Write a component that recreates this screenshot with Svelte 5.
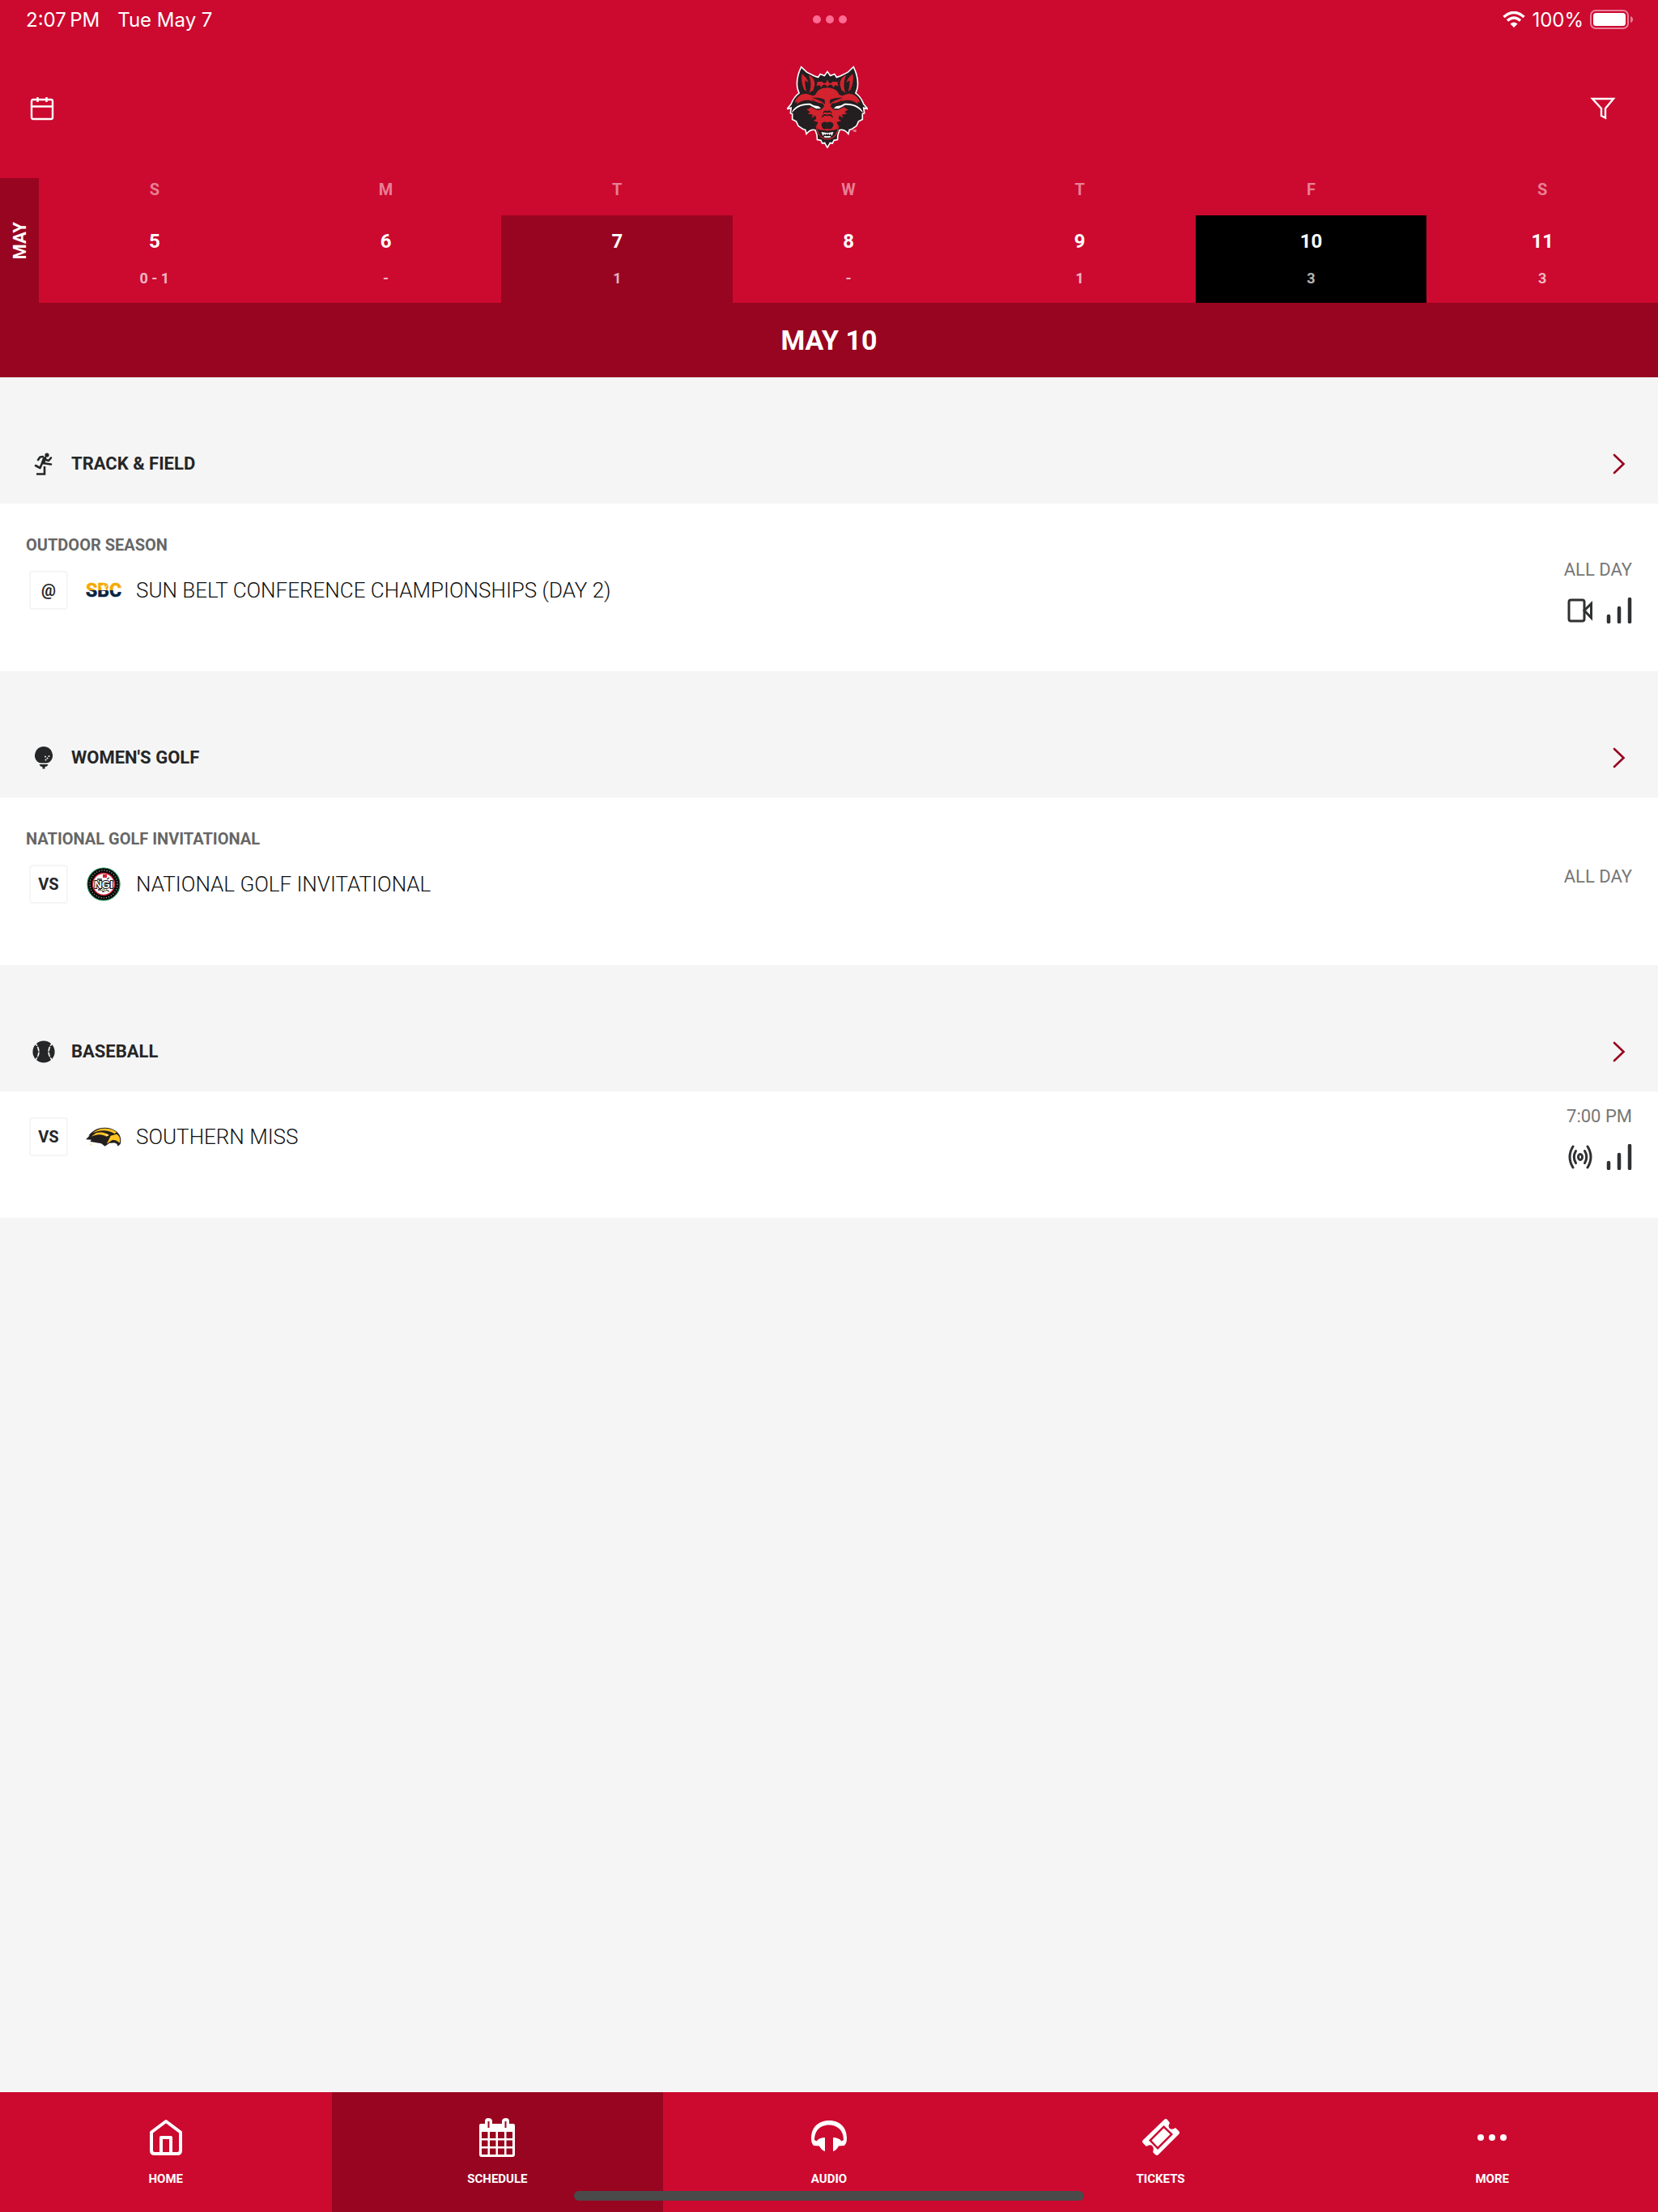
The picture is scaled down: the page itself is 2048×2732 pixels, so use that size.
<script lang="ts">
	type Day = { letter: string; name: string; date: number; record: string; today?: boolean };
	type Section = {
		sport: string;
		icon: 'track' | 'golf' | 'baseball';
		label?: string;
		site: string;
		logo: 'sbc' | 'ngi' | 'usm';
		title: string;
		time: string;
		media: ('video' | 'audio' | 'stats')[];
	};

	const days: Day[] = [
		{ letter: 'S', name: 'Sunday', date: 5, record: '0 - 1' },
		{ letter: 'M', name: 'Monday', date: 6, record: '-' },
		{ letter: 'T', name: 'Tuesday', date: 7, record: '1', today: true },
		{ letter: 'W', name: 'Wednesday', date: 8, record: '-' },
		{ letter: 'T', name: 'Thursday', date: 9, record: '1' },
		{ letter: 'F', name: 'Friday', date: 10, record: '3' },
		{ letter: 'S', name: 'Saturday', date: 11, record: '3' },
	];

	const sections: Section[] = [
		{
			sport: 'TRACK & FIELD',
			icon: 'track',
			label: 'OUTDOOR SEASON',
			site: '@',
			logo: 'sbc',
			title: 'SUN BELT CONFERENCE CHAMPIONSHIPS (DAY 2)',
			time: 'ALL DAY',
			media: ['video', 'stats'],
		},
		{
			sport: "WOMEN'S GOLF",
			icon: 'golf',
			label: 'NATIONAL GOLF INVITATIONAL',
			site: 'VS',
			logo: 'ngi',
			title: 'NATIONAL GOLF INVITATIONAL',
			time: 'ALL DAY',
			media: [],
		},
		{
			sport: 'BASEBALL',
			icon: 'baseball',
			site: 'VS',
			logo: 'usm',
			title: 'SOUTHERN MISS',
			time: '7:00 PM',
			media: ['audio', 'stats'],
		},
	];

	const tabs = ['HOME', 'SCHEDULE', 'AUDIO', 'TICKETS', 'MORE'];

	let selected = $state(10);
	let activeTab = $state('SCHEDULE');
</script>

{#snippet wolfHalf()}
	<path class="red" d="M151 91 C147 108 151 134 160 152 L168 157 C163 140 162 124 163 116 L176 124 C170 108 162 100 151 91Z" />
	<path class="red" d="M176 96 C190 100 201 116 199 134 L193 155 C188 154 184 158 178 165 C187 142 186 118 176 96Z" />
	<path class="red" d="M206 137 L209 121 L228 121 L234 127 L242 124 L247 113 L247.5 141 L240 132 L229 133 L225 143 L218 134Z" />
	<path class="red" d="M123 201 C127 180 147 165 168 166 L190 173 C187 182 190 191 197 196 C172 187 150 190 131 206 L133 196Z" />
	<path class="red" d="M247.5 143 C222 143 208 154 202 170 L184 176 C192 192 205 201 230 203 L235 214 L224 226 L208 228 L184 217 L177 223 L168 225 L182 236 L172 241 L192 246 L187 259 L202 248 L205 262 L194 268 L212 274 L206 286 L211 300 L221 303 L247.5 306Z" />
	<path class="white" d="M112 240 C117 217 144 201 182 203 L196 211 L214 214 L223 222 L205 223 L190 215 L180 209 C150 207 127 219 112 240Z" />
	<path class="ink" d="M190 181 C211 181 231 184 237 190 L238 206 C226 193 208 190 190 181Z" />
	<path class="ink" d="M233 233 C239 228 244 229 247.5 233 L247.5 239 L238 236 L229 243Z" />
	<path class="ink" d="M226 254 C229 242 239 241 247.5 246 L247.5 251 C240 247 234 249 228 257Z" />
	<path class="ink" d="M224 285 C226 272 237 271 247.5 275 L247.5 299 C238 302 229 300 227 292Z" />
	<path class="edge" d="M205 288 C208 317 220 333 238 337 L247.5 337" />
	<path class="white" d="M224 311 L247.5 315 L247.5 321 L242 317 L239 324 L235 317 L230 326Z M233 329 L236 326 L247.5 327 L247.5 332 L238 332Z" />
{/snippet}

{#snippet sportIcon(name: Section['icon'])}
	{#if name === 'track'}
		<svg class="sport-icon" viewBox="0 0 28 28" aria-hidden="true">
			<circle cx="18" cy="3" r="2.6" />
			<path d="M7 9 L9.500 5.500 L13 5 M16 6 L12 13 L9.500 19 L4 16 M13 13 L23 14.500 M17 9 L20 10 L23 6.500" fill="none" stroke="currentColor" stroke-width="2.6" stroke-linecap="round" stroke-linejoin="round" />
			<path d="M15.500 6 L13 13" stroke="currentColor" stroke-width="4.5" />
			<path d="M5 26.500 H15 V17" fill="none" stroke="currentColor" stroke-width="2.6" />
		</svg>
	{:else if name === 'golf'}
		<svg class="sport-icon" viewBox="0 0 28 28" aria-hidden="true">
			<path d="M14 0 A11 11 0 0 1 22 18.500 Q20 20.500 17 20.500 H11 Q8 20.500 6 18.500 A11 11 0 0 1 14 0Z" />
			<path d="M8.500 22 H19.500 L18 24.500 L15.500 25 V27.500 H12.500 V25 L10 24.500Z" />
			<g fill="#f5f5f5">
				<circle cx="16" cy="12.500" r="1" /><circle cx="20.500" cy="12" r="1" />
				<circle cx="18.500" cy="14.500" r="1" /><circle cx="16.500" cy="16.500" r="1" />
			</g>
		</svg>
	{:else}
		<svg class="sport-icon" viewBox="0 0 28 28" aria-hidden="true">
			<circle cx="14" cy="14" r="13.600" />
			<path d="M4 4 Q12 14 4 24 M24 4 Q16 14 24 24" fill="none" stroke="#f5f5f5" stroke-width="1.5" />
			<path d="M4 8.500 L7.500 6.500 M5 14 H9 M4 19.500 L7.500 21.500 M24 8.500 L20.500 6.500 M23 14 H19 M24 19.500 L20.500 21.500" stroke="#252627" stroke-width="1.2" />
		</svg>
	{/if}
{/snippet}

{#snippet teamLogo(name: Section['logo'])}
	{#if name === 'sbc'}
		<svg class="team-logo" viewBox="0 0 48 48" role="img" aria-label="Sun Belt Conference">
			<defs>
				<linearGradient id="sbc-split" gradientUnits="userSpaceOnUse" x1="0" y1="14" x2="0" y2="34">
					<stop offset="0.5" stop-color="#f5a800" />
					<stop offset="0.5" stop-color="#0a2240" />
				</linearGradient>
			</defs>
			<text class="sbc" x="24" y="32" text-anchor="middle" fill="url(#sbc-split)" stroke="url(#sbc-split)">SBC</text>
			<path d="M24 24 L20 18 M24 24 V16 M24 24 L28 18" stroke="#fff" stroke-width="0.8" />
			<path d="M21 24 A3 3 0 0 1 27 24Z" fill="#fff" />
		</svg>
	{:else if name === 'ngi'}
		<svg class="team-logo" viewBox="0 0 48 48" role="img" aria-label="National Golf Invitational">
			<circle cx="24" cy="24" r="20" fill="#060606" stroke="#16854b" stroke-width="1.200" />
			<circle cx="24" cy="24" r="17" fill="none" stroke="#8a8d8b" stroke-width="1.600" stroke-dasharray="1.200 2" />
			<circle cx="24" cy="24" r="13.500" fill="#fff" stroke="#d3263a" stroke-width="1.400" />
			<path d="M23 12 H28 V16 H23Z" fill="#d92035" />
			<path d="M16 18 H22 M28 18 L31 16 M17 31 H21 M22 33 H25 M27 31 L31 33" stroke="#333" stroke-width="1.300" />
			<path d="M21 32 L24 30 L27 33" stroke="#9aa05a" stroke-width="1.300" fill="none" />
			<text class="ngi" x="24" y="29" text-anchor="middle">NGI</text>
		</svg>
	{:else}
		<svg class="team-logo" viewBox="314 391 144 144" role="img" aria-label="Southern Miss">
			<path d="M320 473 L335 458 L330 459 C344 440 365 428 392 429 C412 430 431 437 439 449 C448 457 453 475 448 490 L439 498 L435 489 C426 483 418 486 408 486 L391 498 L377 488 L336 481 L341 474Z" fill="#231f20" />
			<path d="M345 449 C359 437 376 431 393 432 C413 433 426 439 434 446 L427 452 C407 440 384 437 363 443Z" fill="#ffc423" />
			<path d="M340 462 L358 449 C378 443 391 447 407 456 L397 462 C380 452 362 452 340 462Z" fill="#ffc423" />
			<path d="M405 474 L412 459 L434 453 C447 461 449 474 445 486 C440 480 430 473 418 475 L397 489Z" fill="#ffc423" />
			<path d="M393 453 L403 456 L400 461Z" fill="#fff" />
			<path d="M336 487 H342 V495 H336Z" fill="#ffe3a0" />
		</svg>
	{/if}
{/snippet}

{#snippet mediaIcon(name: string)}
	{#if name === 'video'}
		<svg viewBox="0 0 32 32" role="img" aria-label="Video">
			<rect x="2" y="3" width="19" height="26" rx="2.500" />
			<path d="M21 16 L29.500 7.500 V25 Z" />
		</svg>
	{:else if name === 'audio'}
		<svg viewBox="0 0 32 32" role="img" aria-label="Audio">
			<ellipse cx="16" cy="16" rx="2.500" ry="3.500" />
			<path d="M10.500 8.500 Q6 16 10.500 23.500 M21.500 8.500 Q26 16 21.500 23.500 M7 3 Q-1 16 7 29 M25 3 Q33 16 25 29" stroke-linecap="round" />
		</svg>
	{:else}
		<svg viewBox="0 0 32 32" role="img" aria-label="Stats">
			<path d="M3 23 V30 M16 13 V30 M29 2 V30" stroke-width="4.500" stroke-linecap="round" />
		</svg>
	{/if}
{/snippet}

{#snippet tabIcon(name: string)}
	{#if name === 'HOME'}
		<svg class="tab-icon" viewBox="0 0 48 48" aria-hidden="true">
			<path d="M6 17.500 L24 4 L42 17.500 V40 Q42 44 38 44 H10 Q6 44 6 40Z M18 44 V24 H30 V44" fill="none" stroke="currentColor" stroke-width="4" stroke-linejoin="round" />
		</svg>
	{:else if name === 'SCHEDULE'}
		<svg class="tab-icon" viewBox="0 0 48 48" aria-hidden="true">
			<path fill-rule="evenodd" d="M4 7 H9 V4 Q9 0 13 0 Q18 0 18 4 V7 H30 V4 Q30 0 35 0 Q39 0 39 4 V7 H44 Q46 7 46 9 V45 Q46 48 43 48 H5 Q2 48 2 45 V9 Q2 7 4 7Z
				M5 17 V25 H12.500 V17Z M15 17 V25 H22.500 V17Z M25 17 V25 H33 V17Z M35.500 17 V25 H43 V17Z
				M5 27.500 V35 H12.500 V27.500Z M15 27.500 V35 H22.500 V27.500Z M25 27.500 V35 H33 V27.500Z M35.500 27.500 V35 H43 V27.500Z
				M5 37.500 V45 H12.500 V37.500Z M15 37.500 V45 H22.500 V37.500Z M25 37.500 V45 H33 V37.500Z M35.500 37.500 V45 H43 V37.500Z" />
			<path d="M13.500 4 V12 M34.500 4 V12" stroke="#980520" stroke-width="2" />
		</svg>
	{:else if name === 'AUDIO'}
		<svg class="tab-icon" viewBox="0 0 48 48" aria-hidden="true">
			<path d="M2 25 C2 10 12 3 24 3 C36 3 46 10 46 25 Q46 31 43 34 L36 34.500 Q33 40 29 41 V24 Q36 24 39.500 28.500 L42 27 C42 15 34 8.500 24 8.500 C14 8.500 6 15 6 27 L8.500 28.500 Q12 24 19 24 V41 Q15 40 12 34.500 L5 34 Q2 31 2 25Z" />
		</svg>
	{:else if name === 'TICKETS'}
		<svg class="tab-icon" viewBox="0 0 48 48" aria-hidden="true">
			<path fill-rule="evenodd" d="M28 2 Q30 0 32 2 L35 6 Q32 10 35 13 Q38 15 42 12 L46 16 Q48 18 46 20 L21 45 Q19 47 17 45 L14 42 Q16 37 13 34 Q10 32 6 35 L2 31 Q0 29 2 27Z M27.500 9 L9 27.500 L20 39 L39 20Z M27.500 12.500 L35.500 20 L20 35.500 L12.500 27.500Z" />
		</svg>
	{:else}
		<svg class="tab-icon" viewBox="0 0 48 48" aria-hidden="true">
			<circle cx="10" cy="24" r="4" /><circle cx="24" cy="24" r="4" /><circle cx="38" cy="24" r="4" />
		</svg>
	{/if}
{/snippet}

<div class="screen">
	<header class="top">
		<div class="status-bar">
			<div class="status-side">
				<span>2:07&thinsp;PM</span>
				<span>Tue May 7</span>
			</div>
			<div class="multitask"><i></i><i></i><i></i></div>
			<div class="status-side right">
				<svg class="wifi" viewBox="0 0 28 20" aria-hidden="true">
					<path d="M1.500 7 Q14 -4 26.500 7 M6 11.500 Q14 4.500 22 11.500" fill="none" stroke="currentColor" stroke-width="3.600" />
					<path d="M9.500 15.500 Q14 11.500 18.500 15.500 L14 20Z" />
				</svg>
				<span>100%</span>
				<svg class="battery" viewBox="0 0 54 24" aria-hidden="true">
					<rect x="1" y="1" width="46" height="22" rx="6" fill="none" stroke="#e8809a" stroke-width="2" />
					<rect x="4" y="4" width="40" height="16" rx="3.500" />
					<path d="M50 8 Q53 9 53 12 Q53 15 50 16Z" fill="#e8809a" />
				</svg>
			</div>
		</div>

		<div class="app-bar">
			<button class="icon-button" type="button" aria-label="Open calendar">
				<svg viewBox="0 0 32 32" aria-hidden="true">
					<path d="M5 5 H27 Q29 5 29 7 V27 Q29 29 27 29 H5 Q3 29 3 27 V7 Q3 5 5 5Z M3 13.500 H29 M10.500 2 V8 M21.500 2 V8" />
				</svg>
			</button>
			<svg class="wolf" viewBox="94 60 306 312" role="img" aria-label="Red Wolves">
				<path
					class="outline"
					d="M247 87 L237 101 L221 95 L213 107 L196 101 L168 87 L149 69 C137 93 131 125 137 148 L143 165 C126 177 118 191 112 207 L102 219 L113 216 L110 238 L117 241 L117 262 L131 269 L139 286 L156 298 L166 301 L169 313 C178 302 193 297 203 302 L210 322 L211 338 L224 340 L229 351 L238 349 L247 365
					L256 349 L265 351 L270 340 L283 338 L284 322 L291 302 C301 297 316 302 325 313 L328 301 L338 298 L355 286 L363 269 L377 262 L377 241 L384 238 L381 216 L392 219 L382 207 C376 191 368 177 351 165 L357 148 C363 125 357 93 345 69 L326 87 L298 101 L281 107 L273 95 L257 101Z"
				/>
				<g>{@render wolfHalf()}</g>
				<g transform="translate(494 0) scale(-1 1)">{@render wolfHalf()}</g>
				<text class="tm" x="343" y="311">TM</text>
			</svg>
			<button class="icon-button filter" type="button" aria-label="Filter schedule">
				<svg viewBox="0 0 32 32" aria-hidden="true">
					<path d="M3 4 H29 L19 16 V27.500 L14 25 V16 Z" />
				</svg>
			</button>
		</div>

		<div class="week">
			<div class="month"><span>MAY</span></div>
			{#each days as day}
				<div class="day">
					<span class="letter">{day.letter}</span>
					<button
						class="date"
						class:today={day.today}
						class:selected={selected === day.date}
						type="button"
						aria-label="{day.name}, May {day.date}"
						aria-pressed={selected === day.date}
						onclick={() => (selected = day.date)}
					>
						<span class="number">{day.date}</span>
						<span class="record">{day.record}</span>
					</button>
				</div>
			{/each}
		</div>
	</header>

	<h1>MAY {selected}</h1>

	<main>
		{#each sections as section}
			<section>
				<a class="section-head" href="#{section.icon}">
					{@render sportIcon(section.icon)}
					<h2>{section.sport}</h2>
					<svg class="chevron" viewBox="0 0 16 26" aria-hidden="true">
						<path d="M2 2 L13.500 13 L2 24" />
					</svg>
				</a>
				<article>
					{#if section.label}
						<p class="label">{section.label}</p>
					{/if}
					<div class="event">
						<div class="matchup">
							<span class="site">{section.site}</span>
							{@render teamLogo(section.logo)}
							<h3>{section.title}</h3>
						</div>
						<div class="info">
							<span class="time">{section.time}</span>
							<div class="media">
								{#each section.media as item}
									{@render mediaIcon(item)}
								{/each}
							</div>
						</div>
					</div>
				</article>
			</section>
		{/each}
	</main>

	<nav>
		{#each tabs as tab}
			<button type="button" class:active={activeTab === tab} onclick={() => (activeTab = tab)}>
				{@render tabIcon(tab)}
				<span>{tab}</span>
			</button>
		{/each}
		<div class="home-indicator"></div>
	</nav>
</div>

<style>
	:global(body) {
		margin: 0;
		background: #f5f5f5;
	}

	.screen {
		display: flex;
		flex-direction: column;
		min-height: 100vh;
		color: #252627;
		font-family: Roboto, sans-serif;
	}

	button {
		padding: 0;
		border: none;
		background: none;
		color: inherit;
		font: inherit;
		cursor: pointer;
	}

	svg {
		display: block;
		flex-shrink: 0;
		fill: currentColor;
	}

	h1,
	h2,
	h3,
	p {
		margin: 0;
	}

	.top {
		background: #cc092f;
		color: #fff;
	}

	.status-bar {
		display: flex;
		align-items: center;
		height: 48px;
		padding: 0 30px 0 32px;
		font-family: Inter, sans-serif;
		font-size: 24px;
	}

	.status-side {
		display: flex;
		flex: 1;
		align-items: center;
		gap: 22px;
	}

	.status-side.right {
		justify-content: flex-end;
		gap: 8px;
	}

	.multitask {
		display: flex;
		gap: 6px;
	}

	.multitask i {
		width: 10px;
		height: 10px;
		border-radius: 50%;
		background: #ff6b93;
	}

	.wifi {
		width: 28px;
		height: 20px;
	}

	.battery {
		width: 54px;
		height: 24px;
	}

	.app-bar {
		display: grid;
		grid-template-columns: 1fr auto 1fr;
		align-items: center;
		height: 172px;
		padding: 0 40px 0 36px;
	}

	.icon-button {
		justify-self: start;
		height: 48px;
	}

	.icon-button.filter {
		justify-self: end;
		margin-right: 12px;
	}

	.icon-button svg {
		width: 32px;
		height: 32px;
		fill: none;
		stroke: currentColor;
		stroke-width: 2.400;
	}

	.wolf {
		width: 100px;
		height: 102px;
		margin-bottom: 4px;
	}

	.wolf .outline {
		fill: #231f20;
		stroke: #fff;
		stroke-width: 10;
		stroke-linejoin: miter;
		paint-order: stroke;
	}

	.wolf .red {
		fill: #d2232e;
	}

	.wolf .white {
		fill: #fff;
	}

	.wolf .ink {
		fill: #231f20;
	}

	.wolf .edge {
		fill: none;
		stroke: #d2232e;
		stroke-width: 4;
	}

	.wolf .tm {
		fill: #fff;
		font-size: 9px;
	}

	.week {
		display: flex;
	}

	.month {
		display: flex;
		align-items: center;
		justify-content: center;
		width: 48px;
		background: #980520;
		font-size: 22px;
		font-weight: 700;
	}

	.month span {
		writing-mode: vertical-rl;
		transform: rotate(180deg);
	}

	.day {
		display: flex;
		flex: 1 1 0;
		flex-direction: column;
		font-weight: 700;
		text-align: center;
	}

	.letter {
		height: 46px;
		color: #e77f94;
		font-size: 20px;
		line-height: 28px;
	}

	.date {
		display: flex;
		flex-direction: column;
		align-items: center;
		height: 108px;
		font-weight: 700;
	}

	.date.today {
		background: #980520;
	}

	.date.selected {
		background: #000;
	}

	.number {
		margin-top: 16px;
		font-size: 24px;
		line-height: 32px;
	}

	.record {
		margin-top: 18px;
		font-size: 18px;
		line-height: 24px;
		opacity: 0.7;
	}

	h1 {
		background: #980520;
		color: #fff;
		font-size: 34px;
		line-height: 92px;
		text-align: center;
	}

	main {
		flex: 1;
	}

	.section-head {
		display: flex;
		align-items: center;
		height: 98px;
		padding: 58px 40px 0;
		color: inherit;
		text-decoration: none;
	}

	.sport-icon {
		width: 28px;
		height: 28px;
	}

	h2 {
		flex: 1;
		padding-left: 20px;
		font-size: 22px;
		line-height: 32px;
	}

	.chevron {
		width: 16px;
		height: 26px;
		fill: none;
		stroke: #980520;
		stroke-width: 2.600;
		stroke-linecap: round;
	}

	article {
		background: #fff;
	}

	/* the label hangs into the first pixels of the event row */
	.label {
		margin-bottom: -12px;
		padding: 39px 32px 0;
		color: #666;
		font-size: 20px;
		font-weight: 700;
		line-height: 24px;
	}

	.event {
		display: flex;
		align-items: center;
		justify-content: space-between;
		height: 104px;
		padding: 0 32px 52px 36px;
	}

	.matchup {
		display: flex;
		align-items: center;
		padding-top: 8px;
	}

	.site {
		box-sizing: border-box;
		width: 48px;
		height: 48px;
		border: 2px solid #f5f5f5;
		border-radius: 4px;
		font-size: 20px;
		font-weight: 700;
		line-height: 44px;
		text-align: center;
	}

	.team-logo {
		width: 48px;
		height: 48px;
		margin: 0 16px 0 20px;
	}

	.sbc {
		font: 700 23px Roboto, sans-serif;
		stroke-width: 0.6;
	}

	.ngi {
		fill: #fff;
		stroke: #111;
		stroke-width: 2;
		paint-order: stroke;
		font: 700 13px 'Liberation Sans', sans-serif;
	}

	h3 {
		color: #111;
		font-size: 26px;
		font-weight: 300;
		line-height: 36px;
	}

	.info {
		display: flex;
		flex-direction: column;
		align-items: flex-end;
	}

	.time {
		color: #777;
		font-size: 22px;
		line-height: 48px;
	}

	.media {
		display: flex;
		gap: 16px;
		margin-top: 10px;
	}

	.media svg {
		width: 32px;
		height: 32px;
		fill: none;
		stroke: #303132;
		stroke-width: 3;
	}

	nav {
		position: relative;
		display: flex;
		height: 148px;
		background: #cc092f;
		color: #fff;
	}

	nav button {
		display: flex;
		flex: 1 1 0;
		flex-direction: column;
		align-items: center;
		padding-top: 32px;
		font-size: 15px;
		font-weight: 700;
		line-height: 24px;
	}

	nav button.active {
		background: #980520;
	}

	nav button span {
		margin-top: 15px;
	}

	.tab-icon {
		width: 48px;
		height: 48px;
	}

	.home-indicator {
		position: absolute;
		bottom: 14px;
		left: 50%;
		width: 630px;
		height: 12px;
		border-radius: 6px;
		background: #4a4a4a;
		transform: translateX(-50%);
	}
</style>
